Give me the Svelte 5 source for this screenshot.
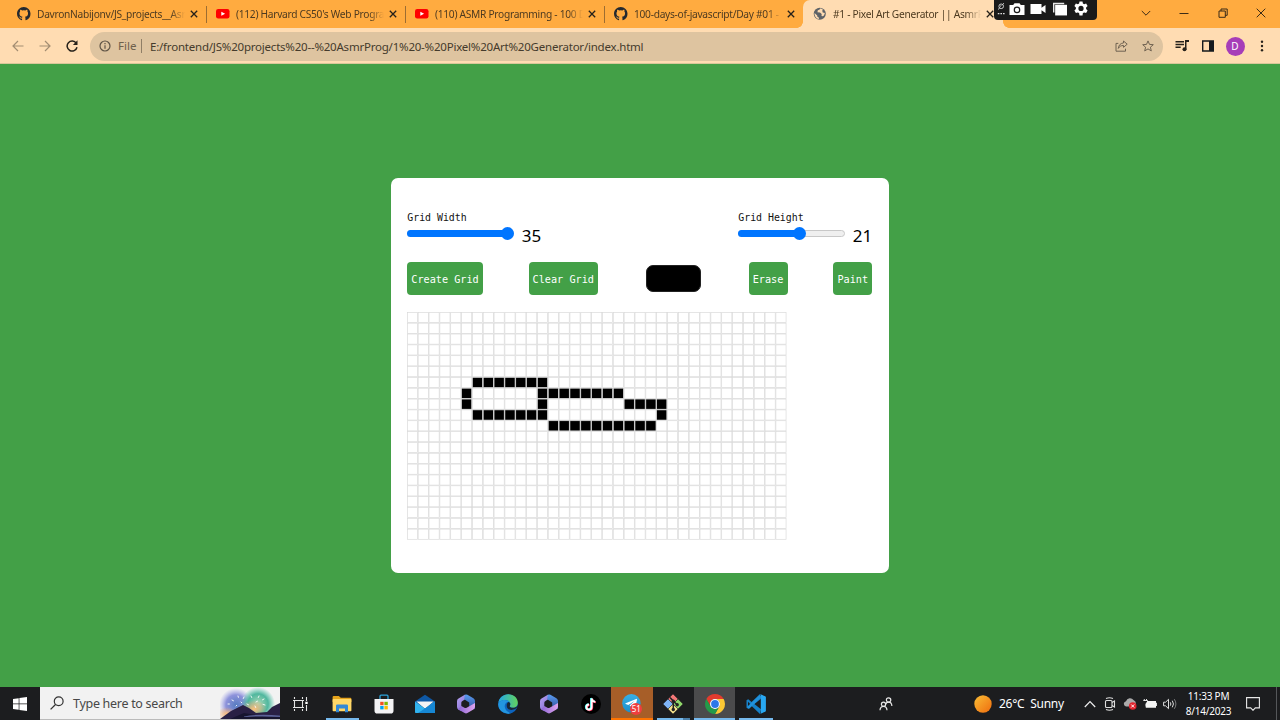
<script>
  const tabs = [
    { icon: 'github', title: 'DavronNabijonv/JS_projects__Asr' },
    { icon: 'youtube', title: "(112) Harvard CS50's Web Progra" },
    { icon: 'youtube', title: '(110) ASMR Programming - 100 D' },
    { icon: 'github', title: '100-days-of-javascript/Day #01 -' },
    { icon: 'globe', title: '#1 - Pixel Art Generator || AsmrPr', active: true }
  ];

  const cols = 35;
  const rows = 21;
  const size = 10.84;
  const runs = [
    [6, 6, 12],
    [7, 5, 5], [7, 12, 19],
    [8, 5, 5], [8, 12, 12], [8, 20, 23],
    [9, 6, 12], [9, 23, 23],
    [10, 13, 22]
  ];
  const painted = (r, c) => runs.some(([y, a, b]) => y === r && c >= a && c <= b);
  const cells = Array.from({ length: rows * cols }, (_, i) => {
    const r = Math.floor(i / cols);
    const c = i % cols;
    return { x: c * size, y: r * size, on: painted(r, c) };
  });

  const apps = [
    { id: 'explorer', state: 'open' },
    { id: 'store' },
    { id: 'mail' },
    { id: 'm365' },
    { id: 'edge' },
    { id: 'm365' },
    { id: 'tiktok' },
    { id: 'telegram', state: 'alert' },
    { id: 'git', state: 'open multi' },
    { id: 'chrome', state: 'open focus' },
    { id: 'vscode', state: 'open' }
  ];
</script>

<svg class="defs" width="0" height="0" aria-hidden="true">
  <defs>
    <linearGradient id="m1" x1="0" y1="0" x2="1" y2="1"><stop offset="0" stop-color="#b8a4f4" /><stop offset="1" stop-color="#7c62cc" /></linearGradient>
    <linearGradient id="m2" x1="0" y1="0" x2="0" y2="1"><stop offset="0" stop-color="#5a9cf0" /><stop offset="1" stop-color="#30509c" /></linearGradient>
    <linearGradient id="m3" x1="0" y1="0" x2="1" y2="0"><stop offset="0" stop-color="#8a65d4" /><stop offset="1" stop-color="#e0a4ee" /></linearGradient>
    <linearGradient id="e1" x1="0" y1="0" x2="1" y2="0"><stop offset="0" stop-color="#23a6e6" /><stop offset="1" stop-color="#62d35c" /></linearGradient>
    <linearGradient id="sun" x1="0" y1="0" x2="1" y2="1"><stop offset="0" stop-color="#f9bd35" /><stop offset="1" stop-color="#ef6c0e" /></linearGradient>
    <linearGradient id="tg" x1="0" y1="0" x2="0" y2="1"><stop offset="0" stop-color="#38b0e5" /><stop offset="1" stop-color="#1c8fcb" /></linearGradient>
  </defs>
</svg>

{#snippet favicon(id)}
  <svg class="fav" viewBox="0 0 16 16">
    {#if id === 'github'}
      <path fill="#24292f" d="M8 0C3.58 0 0 3.58 0 8c0 3.54 2.29 6.53 5.47 7.59.4.07.55-.17.55-.38 0-.19-.01-.82-.01-1.49-2.01.37-2.53-.49-2.69-.94-.09-.23-.48-.94-.82-1.13-.28-.15-.68-.52-.01-.53.63-.01 1.08.58 1.23.82.72 1.21 1.87.87 2.33.66.07-.52.28-.87.51-1.07-1.78-.2-3.64-.89-3.64-3.95 0-.87.31-1.59.82-2.15-.08-.2-.36-1.02.08-2.12 0 0 .67-.21 2.2.82a7.6 7.6 0 0 1 4 0c1.53-1.04 2.2-.82 2.2-.82.44 1.1.16 1.92.08 2.12.51.56.82 1.27.82 2.15 0 3.07-1.87 3.75-3.65 3.95.29.25.54.73.54 1.48 0 1.07-.01 1.93-.01 2.2 0 .21.15.46.55.38A8.01 8.01 0 0 0 16 8c0-4.42-3.58-8-8-8z" />
    {:else if id === 'youtube'}
      <rect x="0" y="2.4" width="16" height="11.2" rx="2.6" fill="#f00" /><path d="M6.3 5.5v5L10.8 8z" fill="#fff" />
    {:else}
      <circle cx="8" cy="8" r="7.2" fill="#5f6368" />
      <path fill="#ffdcb2" d="M1.8 7.2 5 10.1v1.2l2 1.3v1.7A6.4 6.4 0 0 1 1.8 7.2zM8.4 1.7l-.8 1.7-1.9.4-.4 2.4 3 .4 2 1.7-.2 2.4 1.3.4 1.6-1 1.1-3.1-2.6-.5L11 4.5l.7-1.6a6.4 6.4 0 0 0-3.3-1.2z" />
    {/if}
  </svg>
{/snippet}

{#snippet appIcon(id)}
  <svg class="app" viewBox="0 0 20 20">
    {#if id === 'explorer'}
      <path fill="#e5a31b" d="M.6 3.2Q.6 2 1.8 2h5l2 1.8h9.4q1.2 0 1.2 1.2v3H.6z" />
      <rect x=".6" y="5" width="18.8" height="12.2" rx=".8" fill="#ffd768" />
      <path fill="#3288d6" d="M4 18.2v-6.5q0-1.200 1.200-1.200h9.600q1.200 0 1.200 1.200v6.500h-3v-3.800H7v3.800z" />
    {:else if id === 'store'}
      <path d="M6 5V2.200q0-1 1-1h6q1 0 1 1V5" fill="none" stroke="#2ca4dc" stroke-width="1.300" />
      <path d="M.5 5h19v11.800q0 2.800-2.800 2.800H3.300Q.5 19.600.5 16.800z" fill="#f3f3f5" />
      <path d="M6.200 7.800h3.400v3.400H6.200z" fill="#f25022" /><path d="M10.400 7.800h3.400v3.400h-3.400z" fill="#7fba00" /><path d="M6.200 12h3.400v3.400H6.200z" fill="#00a4ef" /><path d="M10.400 12h3.400v3.400h-3.400z" fill="#ffb900" />
    {:else if id === 'mail'}
      <path fill="#0e58a5" d="M0 7.400 10 .7l10 6.700v4H0z" /><path fill="#f4f4f4" d="M1.400 7.400h17.200L11 14H9z" /><path fill="#31b2ee" d="M0 7.400 10 14.600 20 7.400v10.800q0 .8-.8.8H.8Q0 19 0 18.200z" /><path fill="#1687d4" d="M3 19 12.200 13 20 7.400v10.800q0 .8-.8.8z" />
    {:else if id === 'm365'}
      <path fill="url(#m1)" d="M8.800.8 2.500 4.500Q1 5.400 1 7.200V13q0 1.800 1.500 2.700l2.800 1.300V8.800Q5.300 7.600 6.500 6.900L12.500 3z" />
      <path fill="url(#m2)" d="M8.800.8q1.300-.7 2.600 0l6 3.500Q19 5.200 19 7v8.200l-5.800-2.800V8.400L8.200 5.200z" />
      <path fill="url(#m3)" d="M2 15.300 8.600 19q1.400.8 2.800 0l6-3.500Q19 14.500 19 12.700V9l-8.400 4.700q-1.100.6-2.200 0l-3-1.800z" />
    {:else if id === 'edge'}
      <circle cx="10" cy="10" r="9.800" fill="#0c63bd" />
      <path fill="url(#e1)" d="M.3 9C1 3.800 5.200.2 10.300.2c5.600 0 9.500 4 9.500 8.500 0 3-2.200 5-5 5-2.100 0-3.400-.8-3-1.700.6-1.300.8-2.200.2-3.300C11.200 7.200 9.500 6.100 7 6.100 3.900 6.100 1.300 7.500.3 9z" />
      <path fill="#2396df" d="M.2 10.600C.2 8.300 3 6.100 6.600 6.100c2 0 3.600.8 4.500 1.700C8.300 7.800 6.500 10 6.700 12.600c.2 3.200 3 6 6.300 6.600-6 1.800-12.700-2.200-12.800-8.600z" />
      <path fill="#1c1d1f" d="M10.700 8c1.700.8 1.900 2.400 1.100 3.700-.6 1.100.4 2.100 3 2.100 2 0 3.500-.7 4.600-2.100l.3.900c-1 2-3.500 3.300-6.400 3.300-3.300 0-4.600-2.200-4.600-4.500 0-1.500.8-2.800 2-3.400z" opacity=".85" />
    {:else if id === 'tiktok'}
      <circle cx="10" cy="10" r="10" fill="#000" />
      <g fill="none" stroke-width="1.900"><path stroke="#25f4ee" d="M10 4v8.700a2.600 2.600 0 1 1-2.600-2.600M10 4q.5 3.100 3.700 3.500" /><path stroke="#fe2c55" d="M11.200 4.900v8.700a2.600 2.600 0 1 1-2.600-2.600M11.200 4.900q.5 3.100 3.700 3.500" /><path stroke="#fff" d="M10.600 4.400v8.700A2.600 2.600 0 1 1 8 10.500M10.600 4.400q.5 3.100 3.700 3.500" /></g>
    {:else if id === 'telegram'}
      <circle cx="9.400" cy="9.200" r="9.200" fill="url(#tg)" /><path fill="#fff" d="m3.600 9.200 10.600-4.300q1-.3.800.8l-1.800 8.600q-.3.900-1.200.3L7.500 11.400l5.300-4.600-6.500 4.100-2.600-.9q-.8-.4-.1-.8z" />
    {:else if id === 'git'}
      <g stroke="#252525" stroke-width=".5"><path fill="#f27777" d="m10 0 5 5-5 5-5-5z" /><path fill="#7fb4f5" d="m5 5 5 5-5 5-5-5z" /><path fill="#8fd76a" d="m15 5 5 5-5 5-5-5z" /><path fill="#f4e08a" d="m10 10 5 5-5 5-5-5z" /></g>
      <path d="M7 3.500 10.300 7v9M10.500 7.300l3.700 3.500" stroke="#222" stroke-width="1.500" fill="none" /><circle cx="10.300" cy="7.300" r="1.700" fill="#222" /><circle cx="14.200" cy="10.800" r="1.700" fill="#222" /><circle cx="10.300" cy="15.500" r="1.700" fill="#222" />
    {:else if id === 'chrome'}
      <path fill="#e33b2e" d="M1.340 5A10 10 0 0 1 18.660 5H10a5 5 0 0 0-4.330 7.500z" /><path fill="#fcc934" d="M18.660 5A10 10 0 0 1 10 20l4.330-7.500A5 5 0 0 0 10 5z" /><path fill="#249a48" d="M10 20A10 10 0 0 1 1.340 5l4.330 7.500a5 5 0 0 0 8.660 0z" /><circle cx="10" cy="10" r="5" fill="#fff" /><circle cx="10" cy="10" r="3.900" fill="#2c76e8" />
    {:else}
      <path fill="#1681c9" d="M14 0 5.600 8 2.200 5.300.5 6.200v7.600l1.700.9L5.600 12 14 20l1-4.700L8.400 10 15 4.700z" /><path fill="#1c1d1f" d="m2 7.700 2.200 2.300L2 12.300z" /><path fill="#28a7f1" d="M14 0 19.200 2.300q.7.300.7 1v13.400q0 .7-.7 1L14 20q.8-.6.8-1.600V1.600Q14.800.6 14 0z" />
      <path d="M2 14 14.600 2" stroke="#2192dc" stroke-width="2.600" />
    {/if}
  </svg>
{/snippet}

<div class="screen">
  <header class="tabstrip">
    {#each tabs as t, i}
      <div class="tab" class:active={t.active} class:sep={i < 3}>
        {@render favicon(t.icon)}
        <span class="title">{t.title}</span>
        <svg class="close" viewBox="0 0 8 8"><path d="m.8.8 6.400 6.400M7.200.8.8 7.200" stroke="#26211a" stroke-width="1.300" /></svg>
      </div>
    {/each}
    <div class="wincontrols">
      <svg viewBox="0 0 10 10"><path d="m.8 3 4.200 4.200L9.200 3" /></svg>
      <svg viewBox="0 0 10 10"><path d="M.5 5.500h9" /></svg>
      <svg viewBox="0 0 10 10"><path d="M1 3h6.300v6.300H1zM3 3V1h6.200v6.300h-2" /></svg>
      <svg viewBox="0 0 10 10"><path d="m.7.700 8.600 8.600M9.300.700.700 9.300" /></svg>
    </div>
    <div class="recorder">
      <svg class="pin" viewBox="0 0 8 14"><g fill="none" stroke="#ddd" stroke-width=".9"><circle cx="4.200" cy="4.300" r="2.300" /><path d="m1 7.500 1.800-1.600M5.500 2.500 7 1.200M3 4.500l1.500-1.200" /></g><path d="M.8 11h1.600v1.200H.8zM3.400 11H5v1.200H3.400zM6 11h1.600v1.200H6z" fill="#ddd" /></svg>
      <svg class="cam" viewBox="0 0 16 13"><path fill="#fff" d="M.5 2.500h3.700L5.500.8h5l1.300 1.700h3.700v9.900H.5z" /><circle cx="8" cy="7.400" r="2.700" fill="none" stroke="#1a1a1a" stroke-width="1.200" /></svg>
      <svg class="cam" viewBox="0 0 16 13"><path fill="#fff" d="M.5 1.500h11v3.800l4-2.800v8l-4-2.800v3.800H.5z" /></svg>
      <svg class="cam" viewBox="0 0 16 15"><path fill="#e8e8e8" d="M.5.8h12v1.500H2v9H.5z" /><rect x="2.800" y="3" width="12.700" height="11.400" fill="#fff" /></svg>
      <svg class="gear" viewBox="0 0 16 16"><path fill="#fff" fill-rule="evenodd" d="m6.500.5-.4 2-1.300.7-1.900-.7-1.500 2.600 1.500 1.400v1.500L1.400 9.500l1.500 2.600 1.900-.7 1.300.7.400 2.400h3l.4-2.400 1.300-.7 1.900.7 1.500-2.600-1.500-1.500V6.500l1.500-1.400-1.500-2.600-1.900.7-1.300-.7-.4-2zM8 4.800a2.600 2.600 0 1 1 0 5.200 2.600 2.600 0 0 1 0-5.200z" /></svg>
    </div>
  </header>

  <div class="toolbar">
    <svg class="nav dim" viewBox="0 0 12 12"><path d="M11.500 6H1M6 1 1 6l5 5" /></svg>
    <svg class="nav dim" viewBox="0 0 12 12"><path d="M.5 6H11M6 1l5 5-5 5" /></svg>
    <svg class="nav reload" viewBox="0 0 12 12"><path d="M10.300 3.300A5 5 0 1 0 11 7.300" /><path d="M11.500.3v4.600H6.900z" fill="#26211a" stroke="none" /></svg>
    <div class="omnibox">
      <svg class="info" viewBox="0 0 12 12"><circle cx="6" cy="6" r="5" /><path d="M6 5.300v3.500M6 3v1.300" /></svg>
      <span class="scheme">File</span>
      <span class="url">E:/frontend/JS%20projects%20--%20AsmrProg/1%20-%20Pixel%20Art%20Generator/index.html</span>
      <svg class="share" viewBox="0 0 13 12"><path d="M3.300 3.400H1v7.800h9.500V8.700M8.500 1l3.700 3.200-3.700 3.100V5.500C6 5.500 4.500 6.300 3.300 8.400c.3-3 1.900-5.100 5.200-5.500z" /></svg>
      <svg class="star" viewBox="0 0 12 12"><path d="m6 .9 1.500 3.500 3.800.3-2.900 2.500.9 3.700L6 8.900l-3.300 2 .9-3.700L.7 4.700l3.800-.3z" /></svg>
    </div>
    <svg class="music" viewBox="0 0 14 12"><path d="M.5 1.700h8.500M.5 4.500h8.500M.5 7.300h5.200" stroke="#26211a" stroke-width="1.400" /><path d="M10 0h4v2h-2.500v7.500H10z" fill="#26211a" /><circle cx="9.500" cy="9.300" r="2" fill="#26211a" /></svg>
    <svg class="panel" viewBox="0 0 12 12"><path fill="#161a1e" fill-rule="evenodd" d="M0 .300h12v11.400H0zM1.400 1.700v8.600H7V1.700z" /></svg>
    <span class="avatar">D</span>
    <svg class="dots" viewBox="0 0 4 12"><g fill="#26211a"><circle cx="2" cy="1.700" r="1.200" /><circle cx="2" cy="6" r="1.200" /><circle cx="2" cy="10.300" r="1.200" /></g></svg>
  </div>

  <main>
    <section class="card">
      <div class="sliders">
        <div class="field">
          <label for="gw">Grid Width</label>
          <div class="line"><div id="gw" class="range"><span class="fill full"></span><span class="knob"></span></div><output>35</output></div>
        </div>
        <div class="field">
          <label for="gh">Grid Height</label>
          <div class="line"><div id="gh" class="range"><span class="fill part"></span><span class="knob"></span></div><output>21</output></div>
        </div>
      </div>
      <div class="actions">
        <button class="b1">Create Grid</button>
        <button class="b2">Clear Grid</button>
        <span class="swatch"></span>
        <button class="b3">Erase</button>
        <button class="b3">Paint</button>
      </div>
      <svg class="board" viewBox="0 0 380 228">
        {#each cells as c}
          <rect x={c.x + 0.33} y={c.y + 0.33} width={size - 0.67} height={size - 0.67} class:on={c.on} />
        {/each}
      </svg>
    </section>
  </main>

  <footer>
    <div class="start"><svg viewBox="0 0 14 14"><path fill="#fff" d="M0 2 5.700 1.200v5.400H0zM6.400 1.100 14 0v6.600H6.400zM0 7.300h5.700v5.400L0 11.900zM6.400 7.300H14v6.700l-7.600-1.100z" /></svg></div>
    <div class="search">
      <svg class="lens" viewBox="0 0 14 14"><circle cx="8.700" cy="5.200" r="4.400" fill="none" stroke="#333" stroke-width="1.200" /><path d="M5.500 8.500.600 13.400" stroke="#333" stroke-width="1.300" /></svg>
      <span>Type here to search</span>
      <svg class="art" viewBox="0 0 60 32">
        <defs>
          <radialGradient id="f1"><stop offset="0" stop-color="#567cc0" /><stop offset=".6" stop-color="#8388d8" stop-opacity=".9" /><stop offset="1" stop-color="#a8a8ec" stop-opacity="0" /></radialGradient>
          <radialGradient id="f2"><stop offset="0" stop-color="#b0dcb8" /><stop offset=".6" stop-color="#48b49a" stop-opacity=".95" /><stop offset="1" stop-color="#4cc4a8" stop-opacity="0" /></radialGradient>
          <radialGradient id="f3"><stop offset="0" stop-color="#ffc07a" /><stop offset="1" stop-color="#e8a070" stop-opacity="0" /></radialGradient>
        </defs>
        <circle cx="16" cy="18" r="17" fill="url(#f1)" /><circle cx="38" cy="17" r="17" fill="url(#f2)" /><ellipse cx="34" cy="22" rx="13" ry="9" fill="url(#f3)" /><ellipse cx="7" cy="27" rx="10" ry="7" fill="url(#f3)" />
        <path fill="#292044" d="M0 32 11 24 23 18l6 3 7 5 11-1 5-5 8-4v16z" /><path fill="#17152f" d="m10 32 14-6 12 2h24v4z" /><path d="M24 29.500q14-3 36-1v1.500q-18-1-36 0z" fill="#5c6298" />
        <g stroke="#fff" stroke-width=".9" stroke-linecap="round"><path d="m12 13 1.500.8M18 9l.4 1.300M8 17h1.400M24 10l-.7 1.500M21 15l.8.8M31 9l.7 1.500M39 9l-.7 1.500M36 15l1.500-.8M44 12l-1.500.8M45 18l-2-.6M35 19l.7 1.500M27 17l1.500.8M16 19l.7-.7" /></g>
      </svg>
    </div>
    <div class="slot first"><svg class="view" viewBox="0 0 16 14"><g fill="none" stroke="#e4e4e4" stroke-width="1.100"><path d="M1.500 3.500h8v7h-8zM1.500 0v2M9.500 0v2M1.500 12v2M9.500 12v2M13.500 0v4M13.500 8v6M0 3.500h11M0 10.500h11" /></g><path d="M12.300 4.700h2.400v2.400h-2.400z" fill="#fff" /></svg></div>
    {#each apps as a}
      <div class="slot {a.state ?? ''}">
        {@render appIcon(a.id)}
        {#if a.id === 'telegram'}<span class="badge">51</span>{/if}
      </div>
    {/each}
    <div class="grow"></div>
    <svg class="people" viewBox="0 0 14 14"><g fill="none" stroke="#e8e8e8" stroke-width="1.200"><circle cx="9.600" cy="3" r="2.200" /><path d="M6.700 7.500q.4-2.300 2.900-2.300 3 0 3.300 3.800" /><circle cx="4.500" cy="7.200" r="2.100" /><path d="M1 13.300q.2-4 3.500-4t3.500 4" /></g></svg>
    <svg class="sun" viewBox="0 0 18 18"><circle cx="9" cy="9" r="8.700" fill="url(#sun)" /></svg>
    <span class="weather">26°C&nbsp; Sunny</span>
    <svg class="up" viewBox="0 0 12 8"><path d="M.8 7 6 1.500 11.200 7" fill="none" stroke="#eee" stroke-width="1.200" /></svg>
    <svg class="meet" viewBox="0 0 12 14"><g fill="none" stroke="#ddd" stroke-width="1.100"><rect x="1.500" y="3.500" width="6.500" height="7" rx="1" /><path d="M8 5.500 10.500 4v6L8 8.500M2 1.500q3.500-1.500 7 0M2 12.500q3.500 1.500 7 0" /></g></svg>
    <svg class="cloud" viewBox="0 0 14 12"><path d="M3 8.500A2.700 2.700 0 0 1 3 3.200 4.300 4.300 0 0 1 10.500 2q2.500 1 2.500 4v2.500z" fill="#aaa" /><circle cx="9.700" cy="8" r="3.800" fill="#e0242e" /><path d="m8.200 6.500 3 3M11.200 6.500l-3 3" stroke="#fff" stroke-width="1" /></svg>
    <svg class="batt" viewBox="0 0 14 10"><path d="M4.500 2H13v1.800h.9V7H13v1.800H2.800V5z" fill="#f4f4f4" /><path d="M1.300 0v1.500M3.500 0v1.500M.3 1.500h4.200v1.700L3 4.500v3" fill="none" stroke="#f4f4f4" stroke-width=".9" /></svg>
    <svg class="vol" viewBox="0 0 14 12"><g fill="none" stroke="#ddd" stroke-width="1"><path d="M.6 4.200h2L5.500 1.300v9.400L2.600 7.800h-2z" /><path d="M7.300 4.300q1.200 1.700 0 3.400M9.300 2.700q2.300 3.300 0 6.600" /><path d="M11.300 1.200q3.200 4.800 0 9.600" opacity=".5" /></g></svg>
    <div class="clock"><span>11:33 PM</span><span>8/14/2023</span></div>
    <svg class="note" viewBox="0 0 14 14"><path d="M.6.600h12.800v10.300H9.300L7 13.300l-2.300-2.400H.6z" fill="none" stroke="#e8e8e8" stroke-width="1.100" /></svg>
  </footer>
</div>

<style>
  :global(body) { margin: 0; overflow: hidden; }
  .defs { position: absolute; }
  .screen { width: 1280px; height: 720px; display: grid; grid-template-rows: 28px 36px 623px 33px; background: #43a047; font-family: "Noto Sans", "Open Sans", sans-serif; overflow: hidden; }
  svg { display: block; flex: none; }
  .tabstrip { background: #ffab40; display: flex; padding-left: 8px; position: relative; }
  .tab { width: 199px; box-sizing: border-box; padding: 0 8px 0 9px; display: flex; align-items: center; position: relative; }
  .tab.sep::after { content: ""; position: absolute; right: 0; top: 6px; height: 17px; width: 1px; background: #9d6d31; }
  .tab.active { background: #ffdcb2; border-radius: 7px 7px 0 0; margin-left: -1px; padding-left: 10px; width: 200px; }
  .tab.active::before, .tab.active::after { content: ""; position: absolute; bottom: 0; width: 6px; height: 6px; }
  .tab.active::before { left: -6px; background: radial-gradient(circle at 0 0, #ffab40 5.500px, #ffdcb2 6px); }
  .tab.active::after { right: -6px; background: radial-gradient(circle at 100% 0, #ffab40 5.500px, #ffdcb2 6px); }
  .fav { width: 13.500px; height: 13.500px; }
  .title { font-size: 10.200px; letter-spacing: -.28px; width: 148px; margin-left: 6.500px; white-space: nowrap; overflow: hidden; color: #4d3a20; -webkit-mask-image: linear-gradient(90deg, #000 90%, transparent 100%); mask-image: linear-gradient(90deg, #000 90%, transparent 100%); }
  .close { width: 8px; height: 8px; margin-left: 4.500px; }
  .wincontrols { margin-left: auto; width: 139px; display: flex; justify-content: space-between; align-items: center; padding: 0 14px 3px 0; box-sizing: border-box; }
  .wincontrols svg { width: 10px; height: 10px; fill: none; stroke: #3b2b17; stroke-width: 1; }
  .recorder { position: absolute; left: 994px; top: -4px; width: 103px; height: 24px; box-sizing: border-box; padding: 2px 8px 0 3px; border-radius: 4px; background: #1a1a1a; display: flex; align-items: center; gap: 5.500px; }
  .pin { width: 8px; height: 14px; margin-right: -2px; }
  .cam { width: 16px; height: 14px; }
  .gear { width: 16px; height: 16px; margin-left: -.500px; }

  .toolbar { background: #ffdcb2; display: flex; align-items: center; padding: 1px 16px 0 12px; box-sizing: border-box; border-bottom: 1px solid #d8c79a; }
  .nav { width: 12px; height: 12px; margin-right: 15px; fill: none; stroke: #26211a; stroke-width: 1.500; }
  .nav.dim { stroke: #a38d72; stroke-width: 1.200; }
  .nav.reload { margin-right: 12px; }
  .omnibox { width: 1073px; height: 29px; border-radius: 15px; background: #dec4a0; display: flex; align-items: center; padding: 0 9px; box-sizing: border-box; font-size: 11.500px; letter-spacing: -.215px; color: #453b2c; white-space: nowrap; }
  .omnibox svg { fill: none; stroke: #6f6251; stroke-width: 1; }
  .info { width: 12px; height: 12px; }
  .omnibox .info { stroke: #5f5446; stroke-width: 1.200; }
  .scheme { margin-left: 7px; width: 22px; padding-right: 1px; color: #6e604c; border-right: 1px solid #8f7e66; line-height: 14px; letter-spacing: 0; }
  .url { margin-left: 8px; }
  .share { width: 13px; height: 12px; margin-left: auto; }
  .star { width: 12px; height: 12px; margin-left: 14px; }
  .music { width: 14px; height: 12px; margin-left: 12px; }
  .panel { width: 12px; height: 12px; margin-left: 13px; }
  .avatar { width: 19px; height: 19px; border-radius: 50%; background: #a63db8; color: #fff; font-size: 10px; line-height: 19px; text-align: center; margin-left: 11.500px; }
  .dots { width: 4px; height: 12px; margin-left: auto; }

  main { display: flex; justify-content: center; align-items: flex-start; padding-top: 114px; box-sizing: border-box; }
  .card { width: 498px; height: 394.500px; box-sizing: border-box; background: #fff; border-radius: 7px; margin-left: -.500px; padding: 34px 16.500px 0 16.500px; font-family: "DejaVu Sans Mono", monospace; }
  .sliders { display: flex; justify-content: space-between; height: 50px; }
  label { display: block; font-size: 9.900px; line-height: 12px; height: 12px; color: #111; }
  .field { width: 134px; }
  .line { display: flex; justify-content: space-between; align-items: center; height: 22px; }
  .range { width: 107px; height: 7px; box-sizing: border-box; border: 1px solid #c8c8c8; border-radius: 4px; background: #efefef; display: flex; align-items: center; margin-top: -3px; }
  .fill { height: 7px; border-radius: 4px; background: #0075ff; margin-left: -1px; flex: none; }
  .full { width: 99px; }
  .part { width: 60px; }
  .knob { width: 13px; height: 13px; border-radius: 50%; background: #0075ff; margin-left: -5px; flex: none; }
  output { font-family: "Noto Sans", sans-serif; font-size: 17px; line-height: 22px; color: #000; margin-top: 1px; }
  .actions { display: flex; justify-content: space-between; align-items: center; height: 33px; }
  button { height: 33px; border: 0; border-radius: 4px; padding: 1px 0 0; background: #43a047; color: #fff; font: 10.200px "DejaVu Sans Mono", monospace; white-space: nowrap; }
  .b1 { width: 75.500px; } .b2 { width: 69.500px; } .b3 { width: 39px; }
  .swatch { width: 55px; height: 27px; margin: 0 2px; border-radius: 7px; background: #000; box-sizing: border-box; border: 1px solid #222; }
  .board { width: 380px; height: 228px; margin-top: 17px; }
  .board rect { fill: #fff; stroke: #d9d9d9; stroke-width: .67; }
  .board .on { fill: #000; }

  footer { background: #1c1d1f; display: flex; align-items: center; color: #fff; position: relative; padding-right: 20px; }
  footer::after { content: ""; position: absolute; right: 3px; top: 0; height: 33px; width: 1px; background: #55575a; }
  .start { width: 40px; display: flex; justify-content: center; }
  .start svg { width: 14px; height: 14px; }
  .search { width: 240px; height: 33px; box-sizing: border-box; background: #f2f2f2; border-bottom: 1px solid #bbb; display: flex; align-items: center; padding-left: 10px; color: #484848; font-size: 12.500px; letter-spacing: -.29px; }
  .search span { margin-left: 9px; white-space: nowrap; }
  .lens { width: 14px; height: 14px; }
  .art { width: 60px; height: 32px; margin-left: auto; }
  .slot { width: 41.360px; height: 33px; display: flex; align-items: center; justify-content: center; position: relative; flex: none; }
  .first { width: 41px; margin-right: .700px; }
  .view { width: 16px; height: 14px; }
  .app { width: 20px; height: 20px; }
  .open::after { content: ""; position: absolute; left: 4px; right: 4px; bottom: 0; height: 2px; background: #76b9ed; }
  .multi::after { background: linear-gradient(90deg, #76b9ed 78%, #4a7fa9 78%); }
  .focus { background: #4b4b4c; }
  .focus::after { left: 0; right: 0; }
  .alert { background: #a75e28; }
  .alert::after { content: ""; position: absolute; left: 0; right: 0; bottom: 0; height: 2px; background: #ff7300; }
  .badge { position: absolute; left: 19px; top: 16px; width: 12px; height: 12px; border-radius: 50%; background: #ef3e3e; font-size: 8px; line-height: 12px; text-align: center; }
  .grow { flex: 1; }
  .people { width: 14px; height: 14px; margin-right: 81px; }
  .sun { width: 18px; height: 18px; }
  .weather { width: 76px; margin-left: 7px; font-size: 12px; letter-spacing: -.25px; white-space: nowrap; }
  .up { width: 12px; height: 8px; margin-left: 9px; }
  .meet { width: 12px; height: 14px; margin-left: 8px; }
  .cloud { width: 14px; height: 12px; margin-left: 7px; }
  .batt { width: 14px; height: 10px; margin-left: 6px; }
  .vol { width: 14px; height: 12px; margin-left: 6px; }
  .clock { width: 54px; margin-left: 4.500px; display: flex; flex-direction: column; align-items: center; font-size: 10px; letter-spacing: -.2px; line-height: 15px; white-space: nowrap; }
  .note { width: 14px; height: 14px; margin-left: 10.500px; }
</style>
